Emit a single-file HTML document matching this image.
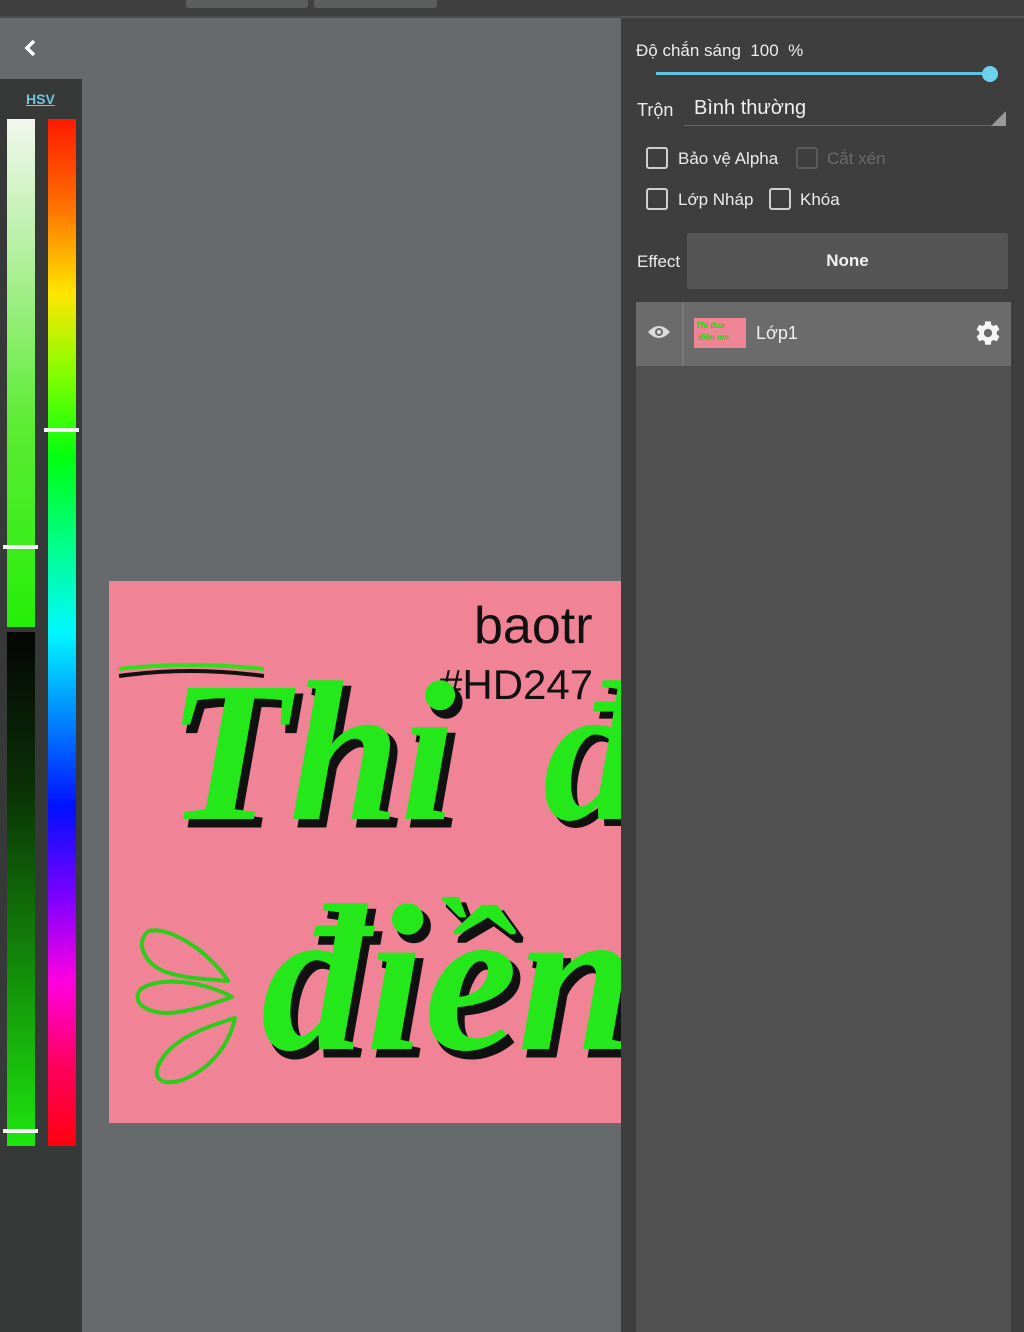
<!DOCTYPE html>
<html><head><meta charset="utf-8"><style>
*{margin:0;padding:0;box-sizing:border-box}
body{width:1024px;height:1332px;overflow:hidden;background:#666a6d;font-family:"Liberation Sans","DejaVu Sans",sans-serif;position:relative}
.abs{position:absolute}
.t{color:#ececec;font-size:17px}
.cb{position:absolute;width:22px;height:22px;border:2px solid #cfcfcf;border-radius:3px}
</style></head><body>
<div class="abs" style="left:0;top:0;width:1024px;height:16px;background:#3f403f"></div>
<div class="abs" style="left:186px;top:0;width:122px;height:8px;background:#5b5e5d;border-radius:0 0 3px 3px"></div>
<div class="abs" style="left:314px;top:0;width:123px;height:8px;background:#5b5e5d;border-radius:0 0 3px 3px"></div>
<div class="abs" style="left:0;top:16px;width:621px;height:2px;background:#4a4c4b"></div>
<svg class="abs" style="left:22px;top:38px" width="18" height="20"><path d="M12 3 L5 10 L12 17" stroke="#fff" stroke-width="3.5" fill="none"/></svg>
<div class="abs" style="left:0;top:79px;width:82px;height:1253px;background:#373838"></div>
<div class="abs" style="left:26px;top:91px;font-size:14px;font-weight:bold;color:#6fc6e0;text-decoration:underline">HSV</div>
<div class="abs" style="left:7px;top:119px;width:28px;height:508px;background:linear-gradient(#f2f7ef,#b8f0a5 25%,#5cec33 60%,#25ee0a)"></div>
<div class="abs" style="left:7px;top:632px;width:28px;height:514px;background:linear-gradient(#050505,#0a3006 30%,#138a0a 65%,#1ee60e)"></div>
<div class="abs" style="left:3px;top:545px;width:35px;height:4px;background:#f5f5f5"></div>
<div class="abs" style="left:3px;top:1129px;width:35px;height:4px;background:#f5f5f5"></div>
<div class="abs" style="left:48px;top:119px;width:28px;height:1027px;background:linear-gradient(#ff1a00,#ff6a00 8%,#ffe600 17%,#80ff00 25%,#00ff10 33%,#00ff90 42%,#00f8ff 50%,#0070ff 60%,#0010ff 67%,#8000ff 76%,#ff00e0 84%,#ff0060 92%,#ff0010)"></div>
<div class="abs" style="left:44px;top:428px;width:35px;height:4px;background:#f5f5f5"></div>
<div class="abs" style="left:109px;top:581px;width:512px;height:542px;background:#f08496;overflow:hidden">
<svg width="512" height="542" style="position:absolute;left:0;top:0">
<text x="365" y="62" font-family="Liberation Sans" font-size="52" fill="#111">baotr</text>
<text x="330" y="118" font-family="Liberation Sans" font-size="42" fill="#111">#HD247</text>
<path d="M10 95 Q80 85 155 95" stroke="#111" stroke-width="4" fill="none"/>
<path d="M10 88 Q80 80 155 88" stroke="#2de01a" stroke-width="4" fill="none"/>
<g font-family="Liberation Serif" font-style="italic" font-weight="bold">
<text x="64" y="245" font-size="200" fill="#111" stroke="#111" stroke-width="3">Thi</text>
<text x="58" y="238" font-size="200" fill="#24e81a">Thi</text>
<text x="440" y="245" font-size="200" fill="#111">đ</text>
<text x="434" y="238" font-size="200" fill="#24e81a">đ</text>
<text x="158" y="475" font-size="210" fill="#111" stroke="#111" stroke-width="3">điền</text>
<text x="152" y="468" font-size="210" fill="#24e81a">điền</text>
</g>
<g fill="none" stroke="#2dcc1a" stroke-width="4" stroke-linejoin="round">
<path d="M119 400 C100 370 60 345 40 350 C25 360 35 385 60 392 C80 398 100 398 119 400Z"/>
<path d="M123 416 C95 400 50 395 32 408 C22 420 35 432 60 432 C85 430 105 422 123 416Z"/>
<path d="M126 437 C100 445 70 455 55 475 C40 495 50 505 70 500 C100 490 120 465 126 437Z"/>
</g>
</svg></div>
<div class="abs" style="left:621px;top:16px;width:403px;height:1316px;background:#3d3e3d"></div>
<div class="abs" style="left:621px;top:16px;width:403px;height:2px;background:#555"></div>
<div class="abs t" style="left:636px;top:41px">Độ chắn sáng&nbsp; 100&nbsp; %</div>
<div class="abs" style="left:656px;top:72px;width:334px;height:3px;background:#5ec4e2"></div>
<div class="abs" style="left:982px;top:66px;width:16px;height:16px;border-radius:50%;background:#6fd0ee"></div>
<div class="abs t" style="left:637px;top:100px;font-size:18px">Trộn</div>
<div class="abs" style="left:694px;top:97px;font-size:20px;color:#efefef">Bình thường</div>
<div class="abs" style="left:684px;top:125px;width:322px;height:1px;background:#666"></div>
<svg class="abs" style="left:991px;top:111px" width="15" height="15"><path d="M15 0 L15 15 L0 15Z" fill="#999"/></svg>
<div class="cb" style="left:646px;top:147px"></div>
<div class="abs t" style="left:678px;top:149px">Bảo vệ Alpha</div>
<div class="cb" style="left:796px;top:147px;border-color:#5a5a5a"></div>
<div class="abs t" style="left:827px;top:149px;color:#6a6a6a">Cắt xén</div>
<div class="cb" style="left:646px;top:188px"></div>
<div class="abs t" style="left:678px;top:190px">Lớp Nháp</div>
<div class="cb" style="left:769px;top:188px"></div>
<div class="abs t" style="left:800px;top:190px">Khóa</div>
<div class="abs t" style="left:637px;top:252px">Effect</div>
<div class="abs" style="left:687px;top:233px;width:321px;height:56px;background:#545554;border-radius:2px;color:#f2f2f2;font-size:17px;font-weight:bold;text-align:center;line-height:56px">None</div>
<div class="abs" style="left:636px;top:302px;width:375px;height:1030px;background:#505050"></div>
<div class="abs" style="left:636px;top:302px;width:375px;height:64px;background:#6b6b6b"></div>
<div class="abs" style="left:682px;top:302px;width:2px;height:64px;background:#7a7a7a"></div>
<svg class="abs" style="left:647px;top:323px" width="24" height="18"><path d="M1 9 Q12 -3 23 9 Q12 21 1 9Z" fill="#ddd"/><circle cx="12" cy="9" r="4" fill="#6b6b6b"/><circle cx="12" cy="9" r="2" fill="#ddd"/></svg>
<div class="abs" style="left:694px;top:318px;width:52px;height:30px;background:#ee8494;font-size:8px;color:#2bd01a;font-style:italic;font-weight:bold;line-height:12px;padding:2px">Thi đua<br>&nbsp;điền mn</div>
<div class="abs" style="left:756px;top:323px;font-size:18px;color:#f0f0f0">Lớp1</div>
<svg class="abs" style="left:974px;top:319px" width="28" height="28" viewBox="0 0 24 24"><path fill="#f5f5f5" d="M19.4 13c.04-.33.06-.66.06-1s-.02-.67-.06-1l2.1-1.650c.2-.15.24-.42.12-.64l-2-3.46c-.12-.22-.39-.3-.61-.22l-2.49 1c-.52-.4-1.08-.73-1.690-.98l-.38-2.65C14.46 2.18 14.25 2 14 2h-4c-.25 0-.46.18-.49.42l-.38 2.65c-.61.25-1.17.59-1.69.98l-2.49-1c-.23-.09-.49 0-.61.22l-2 3.46c-.13.22-.07.49.12.64L4.57 11c-.04.33-.07.67-.07 1s.03.67.07 1l-2.11 1.65c-.19.15-.24.42-.12.64l2 3.46c.12.22.39.3.61.22l2.49-1c.52.4 1.08.73 1.69.98l.38 2.65c.03.24.24.42.49.42h4c.25 0 .46-.18.49-.42l.38-2.65c.61-.25 1.17-.59 1.69-.98l2.49 1c.23.09.49 0 .61-.22l2-3.460c.12-.22.07-.49-.12-.64L19.4 13zM12 15.5c-1.93 0-3.5-1.57-3.5-3.5s1.57-3.5 3.5-3.5 3.5 1.57 3.5 3.5-1.57 3.5-3.5 3.5z"/></svg>
</body></html>
